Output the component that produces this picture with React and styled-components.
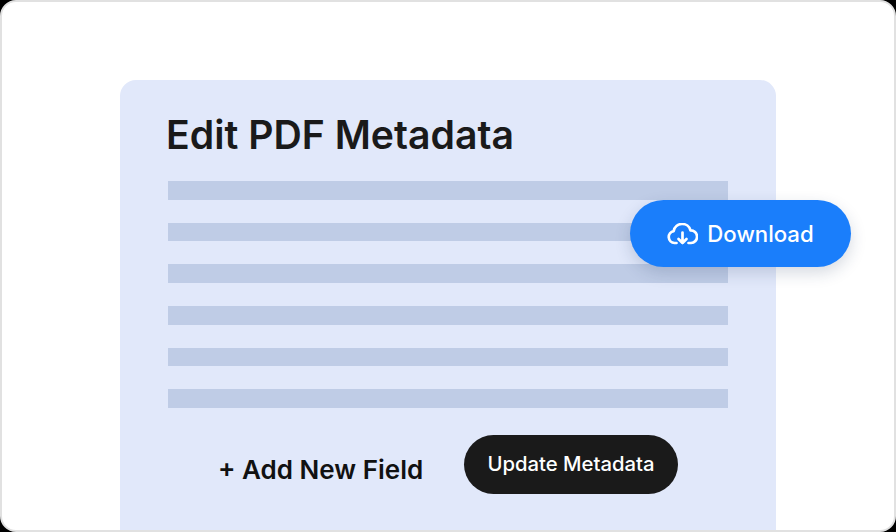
import React from "react";
import styled, { createGlobalStyle } from "styled-components";

const GlobalStyle = createGlobalStyle`
  html, body {
    margin: 0;
    padding: 0;
    background: #000;
  }
  body {
    font-family: Inter, "Liberation Sans", sans-serif;
  }
`;

const Frame = styled.div`
  box-sizing: border-box;
  width: 896px;
  height: 532px;
  padding: 78px 118px 0;
  background: #fff;
  border: 2px solid #e1e1e1;
  border-radius: 16px;
  overflow: hidden;
`;

const Card = styled.div`
  position: relative;
  box-sizing: border-box;
  height: 450px;
  padding: 32px 48px 0;
  background: #e1e8fa;
  border-radius: 16px 16px 0 0;
`;

const Title = styled.h1`
  margin: 0 0 23px -2px;
  font-size: 39.2px;
  line-height: 46px;
  font-weight: 600;
  color: #1a1a1a;
`;

const Lines = styled.div`
  display: flex;
  flex-direction: column;
  gap: 23.2px;
`;

const Line = styled.div`
  height: 18.5px;
  background: #bfcce6;
`;

const Actions = styled.div`
  display: flex;
  align-items: center;
  margin: 27.5px 0 0 50px;
`;

const AddField = styled.span`
  width: 246px;
  margin-top: 10px;
  font-size: 26px;
  font-weight: 600;
  color: #111;
  white-space: nowrap;
`;

const UpdateButton = styled.button`
  width: 214px;
  height: 59px;
  padding: 0 0 3px;
  border: 0;
  border-radius: 30px;
  background: #1a1a1a;
  color: #fff;
  font-family: inherit;
  font-size: 20.3px;
  font-weight: 550;
`;

const DownloadButton = styled.button`
  position: absolute;
  top: 120px;
  left: 510px;
  display: flex;
  align-items: center;
  justify-content: center;
  gap: 9px;
  width: 221px;
  height: 67px;
  padding: 0;
  border: 0;
  border-radius: 34px;
  background: #1a7efb;
  box-shadow: 0 6px 16px rgba(30, 50, 90, 0.18);
  color: #fff;
  font-family: inherit;
  font-size: 22.2px;
  font-weight: 550;
`;

const CloudIcon = () => (
  <svg width="31" height="22" viewBox="0 0 31 22" fill="none" stroke="#fff" strokeWidth="2.7" strokeLinecap="round" strokeLinejoin="round">
    <path d="M9.5 20H7.5a6 6 0 0 1-.8-11.9A8.6 8.6 0 0 1 23.5 7.4 6.3 6.3 0 0 1 24 20H21.5" />
    <path d="M15.5 9.5V20M11.5 16l4 4 4-4" />
  </svg>
);

const rows = [0, 1, 2, 3, 4, 5];

const App = () => {
  return (
    <>
      <GlobalStyle />
      <Frame>
        <Card>
          <Title>Edit PDF Metadata</Title>
          <Lines>
            {rows.map((r) => (
              <Line key={r} />
            ))}
          </Lines>
          <Actions>
            <AddField>+ Add New Field</AddField>
            <UpdateButton>Update Metadata</UpdateButton>
          </Actions>
          <DownloadButton>
            <CloudIcon />
            Download
          </DownloadButton>
        </Card>
      </Frame>
    </>
  );
};

export default App;
